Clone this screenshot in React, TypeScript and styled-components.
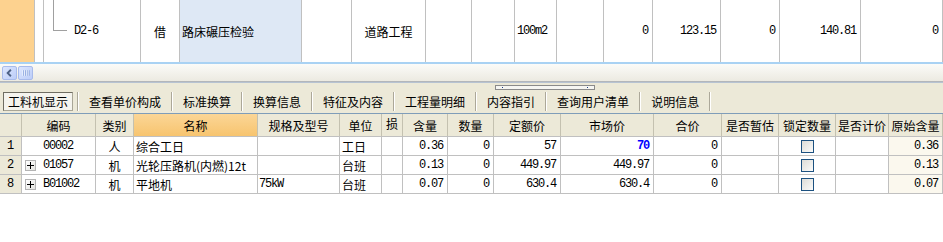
import React from 'react';
import styled, { createGlobalStyle } from 'styled-components';

type Align = 'left' | 'center' | 'right';

const TOP_COLS = '35px 9px 97px 39px 122px 50px 74px 46px 43px 42px 47px 49px 68px 59px 81px 82px';
const GRID_COLS = '22px 74px 38px 124px 82px 42px 21px 45px 46px 67px 93px 68px 57px 57px 53px 1fr';

const tabs = ['工料机显示', '查看单价构成', '标准换算', '换算信息', '特征及内容', '工程量明细', '内容指引', '查询用户清单', '说明信息'];

const headers = ['', '编码', '类别', '名称', '规格及型号', '单位', '损', '含量', '数量', '定额价', '市场价', '合价', '是否暂估', '锁定数量', '是否计价', '原始含量'];

const rows = [
  { no: '1', code: '00002', expand: false, type: '人', name: '综合工日', spec: '', unit: '工日', qty: '0.36', num: '0', price: '57', market: '70', changed: true, total: '0', orig: '0.36' },
  { no: '2', code: '01057', expand: true, type: '机', name: '光轮压路机(内燃)12t', spec: '', unit: '台班', qty: '0.13', num: '0', price: '449.97', market: '449.97', changed: false, total: '0', orig: '0.13' },
  { no: '8', code: 'B01002', expand: true, type: '机', name: '平地机', spec: '75kW', unit: '台班', qty: '0.07', num: '0', price: '630.4', market: '630.4', changed: false, total: '0', orig: '0.07' },
];

const GlobalStyle = createGlobalStyle`
  html, body {
    margin: 0;
    padding: 0;
    background: #fff;
  }
  body {
    font-family: "Noto Sans CJK SC", "Liberation Sans", sans-serif;
    font-size: 12px;
    color: #000;
  }
`;

const App = () => {
  return (
    <>
      <GlobalStyle />
      <Page>
        <TopGrid>
          <Cell $bg="#fdd28f" />
          <Cell />
          <Cell $pad={0}>
            <TreeLine />
            <Mono>D2-6</Mono>
          </Cell>
          <Cell $align="center">借</Cell>
          <Cell $bg="#dee8f5" $pad={2}>路床碾压检验</Cell>
          <Cell />
          <Cell $align="center">道路工程</Cell>
          <Cell />
          <Cell />
          <Cell $pad={2}><Mono>100m2</Mono></Cell>
          <Cell />
          <Cell $align="right"><Mono>0</Mono></Cell>
          <Cell $align="right"><Mono>123.15</Mono></Cell>
          <Cell $align="right"><Mono>0</Mono></Cell>
          <Cell $align="right"><Mono>140.81</Mono></Cell>
          <Cell $align="right"><Mono>0</Mono></Cell>
        </TopGrid>

        <HScroll>
          <ScrollButton>
            <svg width="14" height="14" viewBox="0 0 14 14">
              <path d="M8.5 3.5 L5 7 L8.5 10.5" fill="none" stroke="#4d6185" strokeWidth="2" />
            </svg>
          </ScrollButton>
          <ScrollButton>
            <svg width="14" height="14" viewBox="0 0 14 14">
              {[4, 6, 8, 10].map(x => (
                <g key={x}>
                  <line x1={x} y1="4" x2={x} y2="10" stroke="#eef3fd" />
                  <line x1={x + 1} y1="4" x2={x + 1} y2="10" stroke="#8ca6de" />
                </g>
              ))}
            </svg>
          </ScrollButton>
        </HScroll>

        <TabBar>
          <Grip>
            <GripDot />
            <GripDot />
          </Grip>
          {tabs.map((t, i) => (
            <React.Fragment key={t}>
              <Tab $active={i === 0}>{t}</Tab>
              <TabSep />
            </React.Fragment>
          ))}
        </TabBar>

        <HeaderRow>
          {headers.map((h, i) => (
            <HeadCell key={i} $hot={h === '名称'} $top={h === '损'}>{h}</HeadCell>
          ))}
        </HeaderRow>

        {rows.map(r => (
          <DataRow key={r.no}>
            <Cell $align="center" $bg="#ece9d8"><Mono>{r.no}</Mono></Cell>
            <Cell $pad={2}>
              <Expander $hidden={!r.expand}>
                <svg width="9" height="9" viewBox="0 0 9 9">
                  <path d="M1 4.5 H8 M4.5 1 V8" stroke="#000" strokeWidth="1" />
                </svg>
              </Expander>
              <Mono>{r.code}</Mono>
            </Cell>
            <Cell $align="center">{r.type}</Cell>
            <Cell $pad={2}>{r.name}</Cell>
            <Cell $pad={1}><Mono>{r.spec}</Mono></Cell>
            <Cell $pad={2}>{r.unit}</Cell>
            <Cell />
            <Cell $align="right"><Mono>{r.qty}</Mono></Cell>
            <Cell $align="right"><Mono>{r.num}</Mono></Cell>
            <Cell $align="right"><Mono>{r.price}</Mono></Cell>
            <Cell $align="right">
              {r.changed ? <Changed>{r.market}</Changed> : <Mono>{r.market}</Mono>}
            </Cell>
            <Cell $align="right"><Mono>{r.total}</Mono></Cell>
            <Cell />
            <Cell $align="center"><CheckBox /></Cell>
            <Cell />
            <Cell $align="right" $bg="#fbf8ee"><Mono>{r.orig}</Mono></Cell>
          </DataRow>
        ))}
      </Page>
    </>
  );
};

export default App;

const Page = styled.div`
  width: 943px;
  height: 242px;
  overflow: hidden;
  background: #fff;
`;

const TopGrid = styled.div`
  display: grid;
  grid-template-columns: ${TOP_COLS};
  height: 64px;
  box-sizing: border-box;
  border-bottom: 2px solid #a9d2f3;
`;

const Cell = styled.div<{ $align?: Align; $bg?: string; $pad?: number }>`
  box-sizing: border-box;
  display: flex;
  align-items: center;
  justify-content: ${({ $align }) => ($align === 'right' ? 'flex-end' : $align === 'center' ? 'center' : 'flex-start')};
  padding: 0 ${({ $pad }) => ($pad ?? 3)}px;
  border-right: 1px solid #c0c0c0;
  background: ${({ $bg }) => $bg ?? 'transparent'};
  white-space: nowrap;
  overflow: hidden;
`;

const Mono = styled.span`
  font-family: "Liberation Mono", "DejaVu Sans Mono", monospace;
  font-size: 12px;
  letter-spacing: -1.2px;
  margin-right: 1px;
`;

const Changed = styled(Mono)`
  color: #0000ff;
  font-weight: bold;
`;

const TreeLine = styled.span`
  align-self: flex-start;
  width: 14px;
  height: 31px;
  margin: 0 7px 0 9px;
  box-sizing: border-box;
  border-left: 1px solid #a0a0a0;
  border-bottom: 1px solid #a0a0a0;
`;

const HScroll = styled.div`
  height: 18px;
  box-sizing: border-box;
  display: flex;
  align-items: center;
  gap: 1px;
  padding-left: 2px;
  background: linear-gradient(#fbfbf8, #eceae1);
  border-bottom: 1px solid #b3b6ba;
`;

const ScrollButton = styled.div`
  width: 15px;
  height: 14px;
  box-sizing: border-box;
  display: flex;
  align-items: center;
  justify-content: center;
  border: 1px solid #a8bbeb;
  border-radius: 2px;
  background: linear-gradient(135deg, #dce6fe, #bccdf8);
  svg { display: block; }
`;

const TabBar = styled.div`
  position: relative;
  height: 32px;
  box-sizing: border-box;
  display: flex;
  align-items: flex-end;
  padding: 0 0 2px 3px;
  background: #ece9d8;
  border-top: 1px solid #b7c3d2;
  border-bottom: 1px solid #7f9db9;
`;

const Grip = styled.div`
  position: absolute;
  left: 495px;
  top: 2px;
  width: 100px;
  height: 5px;
  box-sizing: border-box;
  display: flex;
  align-items: center;
  justify-content: space-between;
  padding: 0 6px;
  border: 1px solid #8a8a8a;
  background: #f6f6f2;
`;

const GripDot = styled.span`
  width: 1px;
  height: 1px;
  background: #1c3c80;
`;

const Tab = styled.div<{ $active?: boolean }>`
  height: 19px;
  box-sizing: border-box;
  display: flex;
  align-items: center;
  white-space: nowrap;
  padding: 0 ${({ $active }) => ($active ? '4px' : '10px')};
  margin-right: ${({ $active }) => ($active ? '4px' : '0')};
  border: ${({ $active }) => ($active ? '1px solid' : 'none')};
  border-color: #6f6d62 #a9a697 #a9a697 #6f6d62;
  background: ${({ $active }) => ($active ? '#f5f4ee' : 'transparent')};
`;

const TabSep = styled.span`
  width: 2px;
  height: 19px;
  box-sizing: border-box;
  border-left: 1px solid #aca899;
  border-right: 1px solid #fff;
`;

const HeaderRow = styled.div`
  display: grid;
  grid-template-columns: ${GRID_COLS};
  height: 23px;
  box-sizing: border-box;
  background: #ece9d8;
  border-bottom: 1px solid #c0c0c0;
`;

const HeadCell = styled.div<{ $hot?: boolean; $top?: boolean }>`
  box-sizing: border-box;
  display: flex;
  justify-content: center;
  align-items: ${({ $top }) => ($top ? 'flex-start' : 'center')};
  padding-top: ${({ $top }) => ($top ? '1px' : '0')};
  border-right: 1px solid #c4c1b0;
  white-space: nowrap;
  overflow: hidden;
  background: ${({ $hot }) => ($hot ? 'linear-gradient(#fbd696, #f7c46f)' : 'transparent')};
`;

const DataRow = styled.div`
  display: grid;
  grid-template-columns: ${GRID_COLS};
  height: 19px;
  box-sizing: border-box;
  border-bottom: 1px solid #c0c0c0;
`;

const Expander = styled.span<{ $hidden?: boolean }>`
  width: 11px;
  height: 11px;
  box-sizing: border-box;
  display: flex;
  align-items: center;
  justify-content: center;
  margin: 0 7px 0 1px;
  border: 1px solid #b4b4b4;
  background: linear-gradient(135deg, #ffffff, #e4e4e0);
  visibility: ${({ $hidden }) => ($hidden ? 'hidden' : 'visible')};
  svg { display: block; }
`;

const CheckBox = styled.span`
  width: 13px;
  height: 13px;
  box-sizing: border-box;
  border: 1px solid #1c5180;
  background: linear-gradient(135deg, #dcdcd7, #fbfbfa);
`;
